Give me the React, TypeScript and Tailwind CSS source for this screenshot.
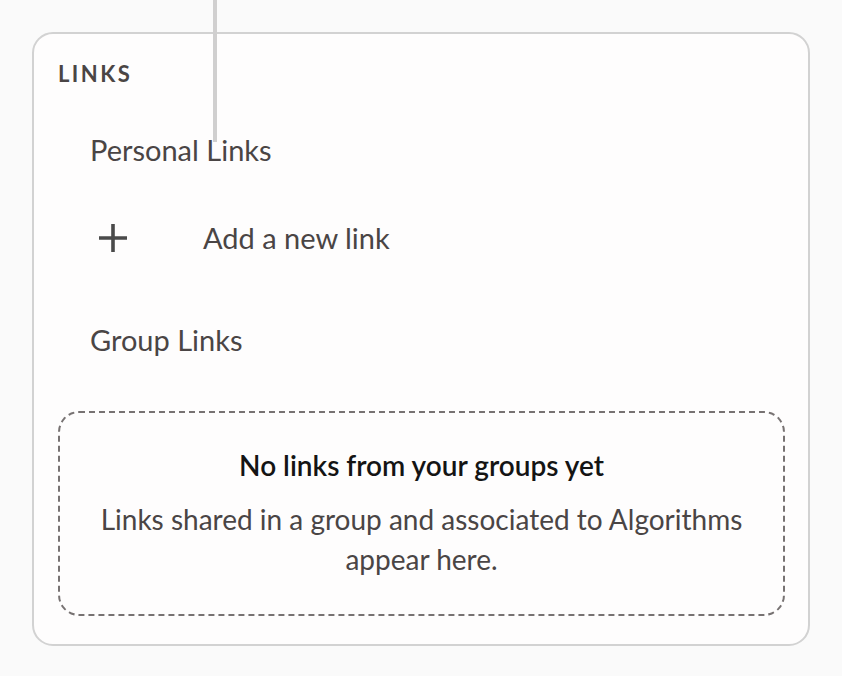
const font = { fontFamily: '"Lato", "Noto Sans", sans-serif' };

// thick plus with square ends, like the reference glyph
const PlusIcon = () => (
  <svg width="28" height="28" viewBox="0 0 28 28" className="text-[#4a4a4a]">
    <path d="M14 0v28M0 14h28" stroke="currentColor" strokeWidth="3.6" fill="none" />
  </svg>
);

export default function App() {
  return (
    <div className="relative min-h-[676px] bg-[#fafafa] p-8" style={font}>
      {/* card */}
      <section className="rounded-[21px] border-2 border-[#d2d2d2] bg-[#fefdfd] pt-[26px] pb-[28px] pl-[24px] pr-[23px]">
        <h2 className="text-[22px] font-bold leading-[28px] tracking-[0.11em] text-[#4a4545]">LINKS</h2>

        <div className="pl-8">
          <h3 className="mt-[44px] text-[29px] leading-[36px] text-[#4a4545]">Personal Links</h3>

          <button className="mt-[52px] flex items-center text-[#4a4545]">
            <span className="ml-[9px] flex h-9 w-7 items-center justify-center">
              <PlusIcon />
            </span>
            <span className="ml-[76px] text-[29px] leading-[36px]">Add a new link</span>
          </button>

          <h3 className="mt-[66px] text-[29px] leading-[36px] text-[#4a4545]">Group Links</h3>
        </div>

        {/* empty state */}
        <div className="mt-[53px] rounded-[21px] border-2 border-dashed border-[#777272] px-6 pt-[34px] pb-[35px] text-center">
          <p className="text-[28px] font-semibold leading-[36px] text-[#141414]">No links from your groups yet</p>
          <p className="mx-auto mt-[16px] max-w-[680px] text-[28px] leading-[40px] text-[#4a4545]">
            Links shared in a group and associated to Algorithms appear here.
          </p>
        </div>
      </section>

      {/* connector line coming from above */}
      <div className="absolute left-[213px] top-0 h-[142px] w-[4px] bg-[#d0cfcf]" />
    </div>
  );
}
